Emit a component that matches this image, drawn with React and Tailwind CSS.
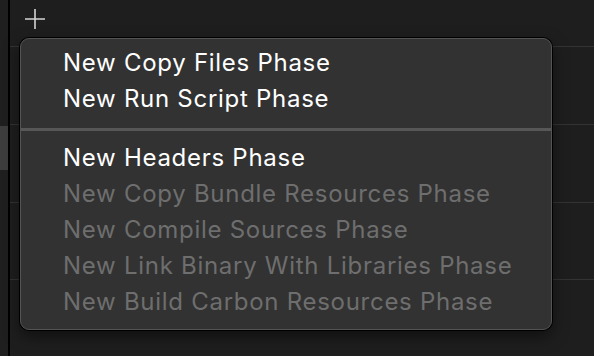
import React from 'react';

const groups = [
    [
        { label: 'New Copy Files Phase', enabled: true },
        { label: 'New Run Script Phase', enabled: true },
    ],
    [
        { label: 'New Headers Phase', enabled: true },
        { label: 'New Copy Bundle Resources Phase', enabled: false },
        { label: 'New Compile Sources Phase', enabled: false },
        { label: 'New Link Binary With Libraries Phase', enabled: false },
        { label: 'New Build Carbon Resources Phase', enabled: false },
    ],
];

const PlusIcon = () => (
    <svg width="22" height="22" viewBox="0 0 22 22" fill="none" stroke="#d4d4d4" strokeWidth="1.6">
        <path d="M11 1v20M1 11h20" />
    </svg>
);

const App = () => {
    return (
        <div className="w-[594px] h-[356px] bg-[#1e1e1e] flex overflow-hidden relative font-['Inter',sans-serif]">
            {/* Left sidebar strip */}
            <div className="w-[8px] h-full bg-[#1f1f1f] flex flex-col">
                <div className="h-[126px]" />
                <div className="h-[44px] bg-[#3d3d3d]" />
            </div>
            <div className="w-[2px] h-full bg-black" />

            {/* Main area */}
            <div className="flex-1 flex flex-col">
                <div className="h-[38px] px-[14px] pt-[8px]">
                    <PlusIcon />
                </div>
                {/* faint rows behind */}
                <div className="flex flex-col">
                    <div className="h-[9px]" />
                    <div className="h-[78px] border-t border-[#333]" />
                    <div className="h-[78px] border-t border-[#333]" />
                    <div className="h-[77px] border-t border-[#333]" />
                    <div className="h-[77px] border-t border-[#333]" />
                </div>
            </div>

            {/* Popup menu */}
            <div className="absolute left-[20px] top-[38px] w-[532px] h-[292px] rounded-[9px] bg-[#323232] border border-[#545454] shadow-[0_0_0_1px_#000,0_6px_16px_rgba(0,0,0,0.5)] pt-[6px]">
                {groups.map((group, gi) => (
                    <div key={gi}>
                        {gi > 0 && <div className="h-[3px] bg-[#575757] mt-[11px] mb-[9px]" />}
                        {group.map((item) => (
                            <div
                                key={item.label}
                                className={`h-[36px] leading-[36px] pl-[42px] text-[24px] tracking-[0.72px] ${item.enabled ? 'text-white' : 'text-[#6e6e6e]'}`}
                            >
                                {item.label}
                            </div>
                        ))}
                    </div>
                ))}
            </div>
        </div>
    );
};

export default App;
